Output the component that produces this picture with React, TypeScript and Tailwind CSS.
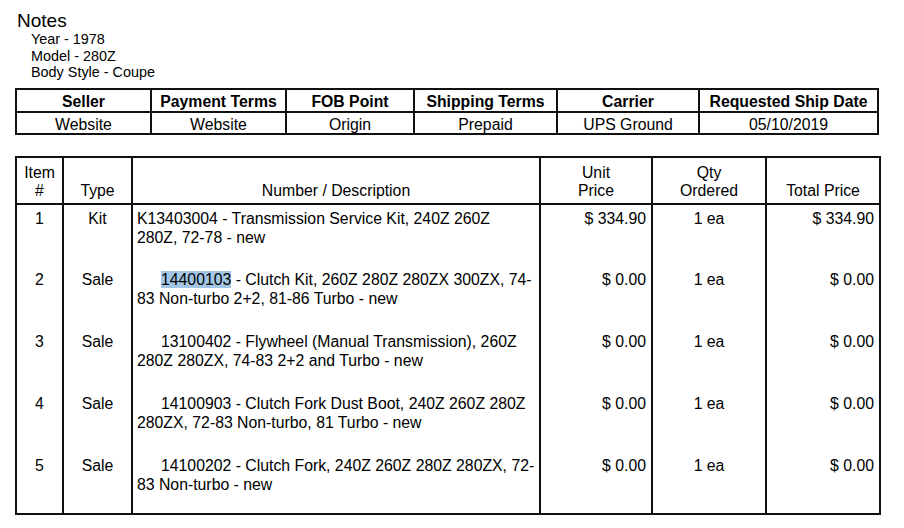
const shipInfo = [
  { label: "Seller", value: "Website", w: "w-[135px]" },
  { label: "Payment Terms", value: "Website", w: "w-[135px]" },
  { label: "FOB Point", value: "Origin", w: "w-[128px]" },
  { label: "Shipping Terms", value: "Prepaid", w: "w-[143px]" },
  { label: "Carrier", value: "UPS Ground", w: "w-[142px]" },
  { label: "Requested Ship Date", value: "05/10/2019", w: "w-[179px]" },
];

type Line = {
  item: number;
  type: string;
  number: string;
  first: string;
  second: string;
  indent: boolean;
  highlight?: boolean;
  unit: string;
  qty: string;
  total: string;
};

// descriptions broken where the printed order breaks them
const lines: Line[] = [
  {
    item: 1,
    type: "Kit",
    number: "K13403004",
    first: " - Transmission Service Kit, 240Z 260Z",
    second: "280Z, 72-78 - new",
    indent: false,
    unit: "$ 334.90",
    qty: "1 ea",
    total: "$ 334.90",
  },
  {
    item: 2,
    type: "Sale",
    number: "14400103",
    first: " - Clutch Kit, 260Z 280Z 280ZX 300ZX, 74-",
    second: "83 Non-turbo 2+2, 81-86 Turbo - new",
    indent: true,
    highlight: true,
    unit: "$ 0.00",
    qty: "1 ea",
    total: "$ 0.00",
  },
  {
    item: 3,
    type: "Sale",
    number: "13100402",
    first: " - Flywheel (Manual Transmission), 260Z",
    second: "280Z 280ZX, 74-83 2+2 and Turbo - new",
    indent: true,
    unit: "$ 0.00",
    qty: "1 ea",
    total: "$ 0.00",
  },
  {
    item: 4,
    type: "Sale",
    number: "14100903",
    first: " - Clutch Fork Dust Boot, 240Z 260Z 280Z",
    second: "280ZX, 72-83 Non-turbo, 81 Turbo - new",
    indent: true,
    unit: "$ 0.00",
    qty: "1 ea",
    total: "$ 0.00",
  },
  {
    item: 5,
    type: "Sale",
    number: "14100202",
    first: " - Clutch Fork, 240Z 260Z 280Z 280ZX, 72-",
    second: "83 Non-turbo - new",
    indent: true,
    unit: "$ 0.00",
    qty: "1 ea",
    total: "$ 0.00",
  },
];

const App = () => {
  return (
    <div className="w-[904px] h-[528px] bg-white text-black font-['Liberation_Sans',Arial,sans-serif] overflow-hidden">
      {/* Notes */}
      <div className="pl-[17px] pt-[10px]">
        <div className="text-[19px] leading-[21px]">Notes</div>
        <div className="pl-[14px] text-[14.4px] leading-[16.5px]">
          <div>Year - 1978</div>
          <div>Model - 280Z</div>
          <div>Body Style - Coupe</div>
        </div>
      </div>

      {/* Shipping info */}
      <table className="ml-[15px] mt-[7px] w-[862px] table-fixed border-collapse text-[15.8px]">
        <thead>
          <tr className="h-[23px]">
            {shipInfo.map((c) => (
              <th
                key={c.label}
                className={`${c.w} border-2 border-[#111] font-bold leading-[17px] p-0 pt-[3px] text-center`}
              >
                {c.label}
              </th>
            ))}
          </tr>
        </thead>
        <tbody>
          <tr className="h-[22px]">
            {shipInfo.map((c) => (
              <td
                key={c.label}
                className="border-2 border-[#111] leading-[17px] p-0 pt-[3px] text-center"
              >
                {c.value}
              </td>
            ))}
          </tr>
        </tbody>
      </table>

      {/* Line items */}
      <table className="ml-[15px] mt-[21px] w-[864px] table-fixed border-collapse text-[15.8px]">
        <colgroup>
          <col className="w-[47px]" />
          <col className="w-[69px]" />
          <col className="w-[408px]" />
          <col className="w-[112px]" />
          <col className="w-[114px]" />
          <col className="w-[114px]" />
        </colgroup>
        <thead>
          <tr className="h-[47px]">
            <th className="border-2 border-[#111] font-normal leading-[18px] align-bottom pb-[3px] text-center">
              Item
              <br />#
            </th>
            <th className="border-2 border-[#111] font-normal leading-[18px] align-bottom pb-[3px] text-center">
              Type
            </th>
            <th className="border-2 border-[#111] font-normal leading-[18px] align-bottom pb-[3px] text-center">
              Number / Description
            </th>
            <th className="border-2 border-[#111] font-normal leading-[18px] align-bottom pb-[3px] text-center">
              Unit
              <br />
              Price
            </th>
            <th className="border-2 border-[#111] font-normal leading-[18px] align-bottom pb-[3px] text-center">
              Qty
              <br />
              Ordered
            </th>
            <th className="border-2 border-[#111] font-normal leading-[18px] align-bottom pb-[3px] text-center">
              Total Price
            </th>
          </tr>
        </thead>
        <tbody>
          {lines.map((l, i) => {
            const last = i === lines.length - 1 ? "border-b-2" : "";
            return (
              <tr key={l.item} className="h-[62px]">
                <td className={`border-x-2 border-[#111] align-top pt-[4px] leading-[19px] text-center ${last}`}>
                  {l.item}
                </td>
                <td className={`border-x-2 border-[#111] align-top pt-[4px] leading-[19px] text-center ${last}`}>
                  {l.type}
                </td>
                <td
                  className={`border-x-2 border-[#111] align-top pt-[4px] pl-[4px] pr-[2px] leading-[19px] whitespace-nowrap ${last}`}
                >
                  <div className={l.indent ? "pl-[24px]" : ""}>
                    <span className={l.highlight ? "bg-[#a4c6e6]" : ""}>{l.number}</span>
                    {l.first}
                  </div>
                  <div>{l.second}</div>
                </td>
                <td className={`border-x-2 border-[#111] align-top pt-[4px] pr-[5px] leading-[19px] text-right ${last}`}>
                  {l.unit}
                </td>
                <td className={`border-x-2 border-[#111] align-top pt-[4px] leading-[19px] text-center ${last}`}>
                  {l.qty}
                </td>
                <td className={`border-x-2 border-[#111] align-top pt-[4px] pr-[5px] leading-[19px] text-right ${last}`}>
                  {l.total}
                </td>
              </tr>
            );
          })}
        </tbody>
      </table>
    </div>
  );
};

export default App;
